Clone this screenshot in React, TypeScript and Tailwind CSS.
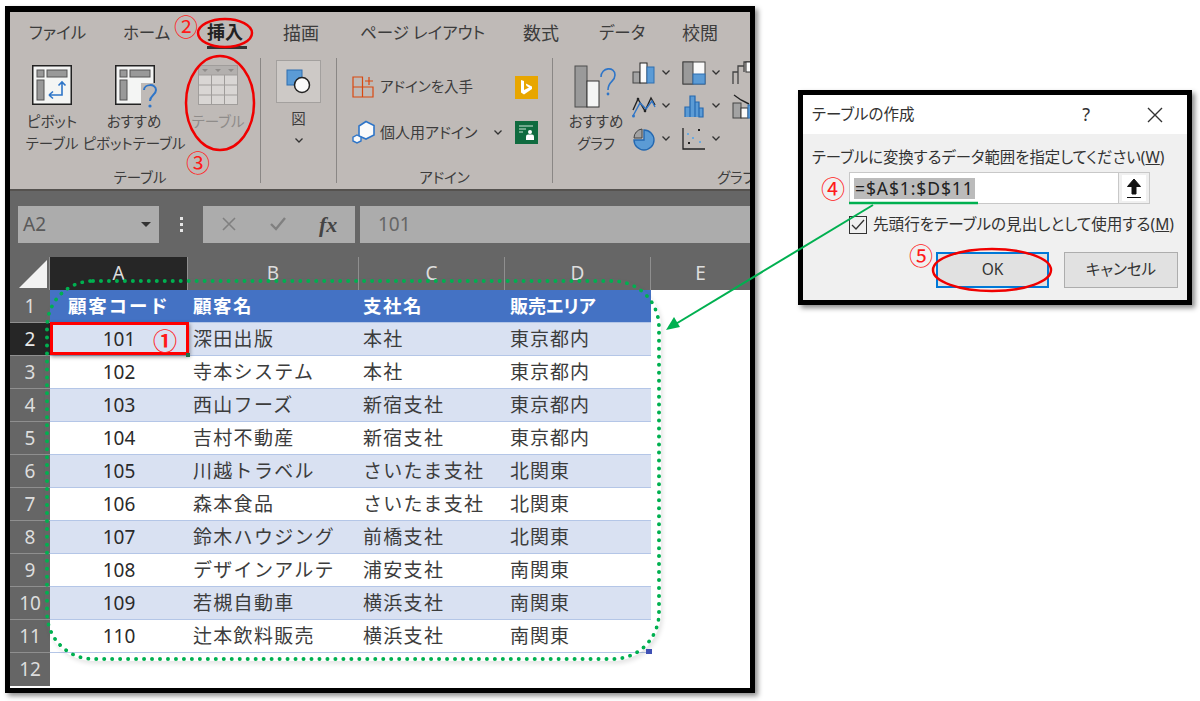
import React from 'react';

const tabs = [
  { label: 'ファイル', cls: 'w-[94px] text-[16.5px]' },
  { label: 'ホーム', cls: 'w-[84px] text-[16.5px]' },
  { label: '挿入', cls: 'w-[76px] text-[18px]' },
  { label: '描画', cls: 'w-[77px] text-[18px]' },
  { label: 'ページ レイアウト', cls: 'w-[163px] text-[16.5px]' },
  { label: '数式', cls: 'w-[76px] text-[18px]' },
  { label: 'データ', cls: 'w-[83px] text-[16.5px]' },
  { label: '校閲', cls: 'w-[60px] text-[18px]' },
];
const colWidths = ['w-[138px]', 'w-[171px]', 'w-[146px]', 'w-[146px]'];

const rows = [
  ['101', '深田出版', '本社', '東京都内'],
  ['102', '寺本システム', '本社', '東京都内'],
  ['103', '西山フーズ', '新宿支社', '東京都内'],
  ['104', '吉村不動産', '新宿支社', '東京都内'],
  ['105', '川越トラベル', 'さいたま支社', '北関東'],
  ['106', '森本食品', 'さいたま支社', '北関東'],
  ['107', '鈴木ハウジング', '前橋支社', '北関東'],
  ['108', 'デザインアルテ', '浦安支社', '南関東'],
  ['109', '若槻自動車', '横浜支社', '南関東'],
  ['110', '辻本飲料販売', '横浜支社', '南関東'],
];

function Chevron({ className }: { className?: string }) {
  return (
    <svg width="10" height="7" viewBox="0 0 10 7" className={className}>
      <path d="M1.5 1.5 L5 5 L8.5 1.5" fill="none" stroke="#333" strokeWidth="1.3" />
    </svg>
  );
}

function PivotIcon() {
  return (
    <svg width="40" height="40" viewBox="0 0 40 40">
      <rect x="0.75" y="0.75" width="38.5" height="38.5" fill="#f4f5f4" stroke="#222" strokeWidth="1.5" />
      <rect x="5" y="5" width="7" height="7" fill="#999" stroke="#555" />
      <rect x="15" y="5" width="20" height="7" fill="#999" stroke="#555" />
      <rect x="5" y="15" width="7" height="20" fill="#999" stroke="#555" />
      <path d="M30 17 V30 H18 M17 30 l4 -3.5 M17 30 l4 3.5 M26.5 20.5 L30 17 L33.5 20.5" fill="none" stroke="#2e75c8" strokeWidth="1.6" />
    </svg>
  );
}

function RecommendIcon() {
  return (
    <svg width="44" height="44" viewBox="0 0 44 44">
      <rect x="0.75" y="0.75" width="38.5" height="38.5" fill="#f4f5f4" stroke="#222" strokeWidth="1.5" />
      <rect x="5" y="5" width="7" height="7" fill="#999" stroke="#555" />
      <rect x="15" y="5" width="20" height="7" fill="#999" stroke="#555" />
      <rect x="5" y="15" width="7" height="20" fill="#999" stroke="#555" />
      <rect x="26" y="18" width="18" height="26" fill="#bfbab7" />
      <path d="M29 25 C29 19 41 18 41 25 C41 30 35 30 35 36" fill="none" stroke="#2e75c8" strokeWidth="2" />
      <circle cx="35" cy="41" r="1.6" fill="#2e75c8" />
    </svg>
  );
}

function TableIcon() {
  return (
    <svg width="40" height="40" viewBox="0 0 40 40">
      <rect x="0.5" y="0.5" width="39" height="39" fill="#d9d6d4" stroke="#a09d9b" />
      <rect x="1" y="1" width="38" height="9" fill="#b3b0ae" />
      <path d="M4 4 h6 l-3 3 z M17 4 h6 l-3 3 z M30 4 h6 l-3 3 z" fill="#8f8c8a" />
      <path d="M13.5 10 V40 M26.5 10 V40 M0 10 H40 M0 20 H40 M0 30 H40" stroke="#a09d9b" fill="none" />
    </svg>
  );
}

function ShapeIcon() {
  return (
    <svg width="26" height="26" viewBox="0 0 26 26">
      <rect x="1" y="1" width="15" height="15" fill="#5b9bd5" stroke="#2f6fb0" />
      <circle cx="16" cy="16" r="7.5" fill="#fafafa" stroke="#222" strokeWidth="1.5" />
    </svg>
  );
}

function StoreIcon() {
  return (
    <svg width="22" height="22" viewBox="0 0 22 22">
      <path d="M1 1 H10.5 V21 H1 Z M1 11 H21 V21 H10.5 M17 1 V9 M13 5 H21" fill="none" stroke="#d9480f" strokeWidth="1.2" />
    </svg>
  );
}

function AddinIcon() {
  return (
    <svg width="24" height="24" viewBox="0 0 24 24">
      <path d="M14 1.5 L22 5.5 V15 L14 19 L7 16 V6 Z" fill="#fafafa" stroke="#2e75c8" strokeWidth="1.6" />
      <path d="M5 15 L9 17.2 V21 L5 23 L1 21 V17.2 Z" fill="#fafafa" stroke="#2e75c8" strokeWidth="1.4" />
    </svg>
  );
}

function BingIcon() {
  return (
    <div className="w-[23px] h-[23px] bg-[#e8a600] flex items-center justify-center">
      <svg width="15" height="17" viewBox="0 0 15 17">
        <path d="M2 1 L5 2 V11 L10 8.5 L7.5 7 L6.8 4.6 L13 7.6 V10 L5 15.5 L2 13.5 Z" fill="#fff" />
      </svg>
    </div>
  );
}

function PeopleIcon() {
  return (
    <div className="w-[23px] h-[23px] bg-[#0f6b3f]">
      <svg width="23" height="23" viewBox="0 0 23 23">
        <path d="M4 5 H18 M4 8 H11 M4 11 H8" stroke="#cfe6da" strokeWidth="1.2" />
        <circle cx="15" cy="11" r="2" fill="#fff" />
        <path d="M11 19 V15.5 Q11 13.5 13 13.5 H17 Q19 13.5 19 15.5 V19 Z" fill="#fff" />
      </svg>
    </div>
  );
}

function RecommendChartIcon() {
  return (
    <svg width="44" height="44" viewBox="0 0 44 44">
      <rect x="1" y="1" width="12" height="41" fill="#9a9a9a" stroke="#4d4d4d" />
      <rect x="13" y="16" width="12" height="26" fill="#f4f5f4" stroke="#333" />
      <path d="M27 12 C27 2 41 1 41 10 C41 17 34 16 34 25" fill="none" stroke="#2e75c8" strokeWidth="1.6" />
      <circle cx="34" cy="29" r="1.4" fill="#2e75c8" />
    </svg>
  );
}

function ColumnChartIcon() {
  return (
    <svg width="24" height="24" viewBox="0 0 24 24">
      <rect x="1" y="11" width="7" height="11" fill="#a3a3a3" stroke="#444" />
      <rect x="8" y="2" width="7" height="20" fill="#fafafa" stroke="#222" />
      <rect x="15" y="6" width="7" height="16" fill="#5b9bd5" stroke="#2f6fb0" />
    </svg>
  );
}

function HierarchyIcon() {
  return (
    <svg width="24" height="24" viewBox="0 0 24 24">
      <rect x="1" y="1" width="22" height="22" fill="#fafafa" stroke="#444" />
      <rect x="1" y="1" width="10" height="22" fill="#9a9a9a" stroke="#444" />
      <rect x="11" y="13" width="12" height="10" fill="#5b9bd5" stroke="#2f6fb0" />
    </svg>
  );
}

function LineChartIcon() {
  return (
    <svg width="24" height="24" viewBox="0 0 24 24">
      <path d="M1 16 L6 5 L13 17 L19 4 L23 11" fill="none" stroke="#222" strokeWidth="1.4" />
      <path d="M1 22 L8 9 L14 15 L20 7 L23 13" fill="none" stroke="#2e75c8" strokeWidth="1.4" />
      <circle cx="1.5" cy="22" r="1.5" fill="#2e75c8" />
      <circle cx="6" cy="5" r="1.3" fill="#222" />
      <circle cx="13" cy="17" r="1.3" fill="#222" />
    </svg>
  );
}

function HistogramIcon() {
  return (
    <svg width="22" height="24" viewBox="0 0 22 24">
      <path d="M2 23 V13 H7 V23 M7 23 V2 H12 V23 M12 23 V8 H16 V23 M16 23 V14 H20 V23 Z" fill="#5b9bd5" stroke="#2468b0" strokeWidth="1.2" />
    </svg>
  );
}

function PieIcon() {
  return (
    <svg width="24" height="24" viewBox="0 0 24 24">
      <path d="M10 2 A9 9 0 0 0 2 11 H10 Z" fill="#a3a3a3" stroke="#444" />
      <path d="M12 3 A10 10 0 1 1 2 13 H12 Z" fill="#5b9bd5" stroke="#2468b0" strokeWidth="1.4" />
    </svg>
  );
}

function ScatterIcon() {
  return (
    <svg width="24" height="24" viewBox="0 0 24 24">
      <path d="M1 1 V22 H23" fill="none" stroke="#222" strokeWidth="1.3" />
      <rect x="16" y="2" width="2" height="2" fill="#222" />
      <rect x="6" y="15" width="2" height="2" fill="#222" />
      <rect x="5" y="6" width="2" height="2" fill="#6aa9de" />
      <rect x="10" y="10" width="2" height="2" fill="#6aa9de" />
      <rect x="17" y="14" width="2" height="2" fill="#6aa9de" />
    </svg>
  );
}

function WaterfallIcon() {
  return (
    <svg width="24" height="24" viewBox="0 0 24 24">
      <path d="M1 23 V11 H6 V5 H12 V1 H24 M6 11 V23 M12 5 V11" fill="none" stroke="#444" strokeWidth="1.3" />
      <rect x="14" y="1" width="6" height="10" fill="#fafafa" stroke="#333" />
    </svg>
  );
}

function ComboIcon() {
  return (
    <svg width="24" height="26" viewBox="0 0 24 26">
      <path d="M2 2 L9 7 L17 11" fill="none" stroke="#222" strokeWidth="1.4" />
      <rect x="1" y="10" width="8" height="15" fill="#a3a3a3" stroke="#444" />
      <rect x="9" y="15" width="7" height="10" fill="#fafafa" stroke="#333" />
      <rect x="16" y="12" width="8" height="13" fill="#5b9bd5" stroke="#2f6fb0" />
    </svg>
  );
}

function RibbonButton({ icon, lines, className, dim }: { icon: React.ReactNode; lines: string[]; className: string; dim?: boolean }) {
  return (
    <div className={`flex flex-col items-center pt-[15px] shrink-0 ${className}`}>
      <div className="h-[45px]">{icon}</div>
      {lines.map((l) => (
        <div key={l} className={`h-[22px] leading-[22px] text-[14.5px] whitespace-nowrap [font-feature-settings:'palt'] ${dim ? 'text-[#8f8c8a]' : 'text-[#3c3c3c]'}`}>
          {l}
        </div>
      ))}
    </div>
  );
}

function GroupLabel({ children, className }: { children: React.ReactNode; className?: string }) {
  return <div className={`h-[30px] shrink-0 leading-[30px] text-[14.5px] text-[#3c3c3c] whitespace-nowrap [font-feature-settings:'palt'] ${className ?? ''}`}>{children}</div>;
}

function Ribbon() {
  return (
    <div className="h-[179px] bg-[#bfbab7] border-b-[2px] border-[#55524f] shrink-0 flex flex-col overflow-hidden">
      <div className="h-[38px] pl-[19px] pt-[8px] flex leading-[26px] text-[#3c3c3c] [font-feature-settings:'palt'] whitespace-nowrap shrink-0">
        {tabs.map((t) => (
          <div key={t.label} className={`shrink-0 ${t.cls}`}>
            {t.label === '挿入' ? <div className="font-bold w-[40px] h-[30px] border-b-[3px] border-[#333] text-[#222] -mt-[1px]">{t.label}</div> : t.label}
          </div>
        ))}
      </div>
      <div className="flex h-[139px]">
        {/* テーブル */}
        <div className="w-[251px] flex flex-col shrink-0 border-r border-[#8a8785] my-[8px] h-[125px]">
          <div className="flex pl-[12px] h-[112px] shrink-0 -mt-[8px]">
            <RibbonButton className="w-[60px]" icon={<PivotIcon />} lines={['ピボット', 'テーブル']} />
            <RibbonButton className="w-[104px]" icon={<div className="pl-[6px]"><RecommendIcon /></div>} lines={['おすすめ', 'ピボットテーブル']} />
            <RibbonButton className="w-[64px]" dim icon={<TableIcon />} lines={['テーブル']} />
          </div>
          <GroupLabel className="text-center pl-[10px]">テーブル</GroupLabel>
        </div>
        {/* 図 */}
        <div className="w-[76px] flex flex-col items-center shrink-0 border-r border-[#8a8785] my-[8px] h-[125px]">
          <div className="w-[45px] h-[43px] mt-[2px] bg-[#cdc9c6] border border-[#a3a09e] flex items-center justify-center">
            <ShapeIcon />
          </div>
          <div className="text-[14.5px] leading-[22px] text-[#3c3c3c] mt-[4px]">図</div>
          <Chevron className="mt-[8px]" />
        </div>
        {/* アドイン */}
        <div className="w-[216px] flex flex-col shrink-0 border-r border-[#8a8785] my-[8px] h-[125px]">
          <div className="h-[104px] shrink-0 pl-[15px] flex flex-col gap-[21px] pt-[17px]">
            <div className="flex items-center h-[24px]">
              <div className="w-[28px]"><StoreIcon /></div>
              <div className="w-[135px] text-[14.5px] text-[#3c3c3c] [font-feature-settings:'palt']">アドインを入手</div>
              <BingIcon />
            </div>
            <div className="flex items-center h-[24px]">
              <div className="w-[28px]"><AddinIcon /></div>
              <div className="w-[113px] text-[15px] text-[#3c3c3c] [font-feature-settings:'palt'] whitespace-nowrap">個人用アドイン</div>
              <div className="w-[22px]"><Chevron /></div>
              <PeopleIcon />
            </div>
          </div>
          <GroupLabel className="text-center">アドイン</GroupLabel>
        </div>
        {/* グラフ */}
        <div className="flex-1 flex flex-col min-w-0">
          <div className="flex h-[112px] shrink-0">
            <RibbonButton className="w-[70px] ml-[8px]" icon={<RecommendChartIcon />} lines={['おすすめ', 'グラフ']} />
            <div className="grid grid-cols-[50px_50px_40px] grid-rows-[33px_33px_33px] pt-[4px] ml-[1px] mt-[2px]">
              {[<ColumnChartIcon />, <HierarchyIcon />, <WaterfallIcon />, <LineChartIcon />, <HistogramIcon />, <ComboIcon />, <PieIcon />, <ScatterIcon />].map((icon, i) => (
                <div key={i} className="flex items-center gap-[5px]">
                  <div className="w-[24px] flex justify-center">{icon}</div>
                  {i % 3 !== 2 && <Chevron />}
                </div>
              ))}
            </div>
          </div>
          <GroupLabel className="pl-[164px]">グラフ</GroupLabel>
        </div>
      </div>
    </div>
  );
}

function FormulaBar() {
  return (
    <div className="h-[66px] shrink-0 bg-[#666666] flex items-center pl-[8px]">
      <div className="w-[141px] h-[37px] bg-[#acacac] flex items-center justify-between pl-[5px] pr-[8px] text-[#5a5a5a] text-[19px]">
        A2
        <div className="w-0 h-0 border-x-[5px] border-x-transparent border-t-[5px] border-t-[#333]" />
      </div>
      <div className="w-[44px] flex flex-col items-center gap-[3px]">
        <div className="w-[3px] h-[3px] bg-[#e6e6e6]" />
        <div className="w-[3px] h-[3px] bg-[#e6e6e6]" />
        <div className="w-[3px] h-[3px] bg-[#e6e6e6]" />
      </div>
      <div className="w-[152px] h-[37px] bg-[#acacac] flex items-center text-[#808080] pl-[18px] gap-[32px] shrink-0">
        <svg width="16" height="16" viewBox="0 0 16 16"><path d="M2 2 L14 14 M14 2 L2 14" stroke="#808080" strokeWidth="1.6" /></svg>
        <svg width="18" height="16" viewBox="0 0 18 16"><path d="M2 8 L7 13 L16 2" fill="none" stroke="#808080" strokeWidth="2.4" /></svg>
        <span className="font-['Liberation_Serif',serif] italic font-bold text-[22px] text-[#444]">fx</span>
      </div>
      <div className="ml-[5px] flex-1 h-[37px] bg-[#acacac] pl-[18px] flex items-center text-[19px] text-[#666]">101</div>
    </div>
  );
}

function Sheet() {
  const headCell = 'h-full flex items-center justify-center border-r border-[#8f8f8f] text-[#dddddd] text-[19px]';
  return (
    <div className="flex-1 min-h-0 bg-white flex flex-col">
      <div className="h-[33px] flex bg-[#666666] shrink-0">
        <div className="w-[40px] h-full relative border-r border-[#8f8f8f]">
          <div className="ml-[9px] mt-[3px] w-0 h-0 border-l-[28px] border-l-transparent border-b-[28px] border-b-[#f2f2f2]" />
        </div>
        {['A', 'B', 'C', 'D'].map((c, i) => (
          <div key={c} className={`${headCell} ${colWidths[i]} ${i === 0 ? 'bg-[#262626]' : ''}`}>{c}</div>
        ))}
        <div className="flex-1 h-full flex items-center justify-center text-[#dddddd] text-[19px]">E</div>
      </div>
      <div className="flex h-[33px] shrink-0">
        <div className="w-[40px] bg-[#666666] text-[#dddddd] text-[19px] flex items-center justify-center border-b border-[#8f8f8f]">1</div>
        <div className="w-[601px] bg-[#4472c4] text-white font-bold text-[18.5px] flex items-center border-b border-[#b4c6e7]">
          <div className={`${colWidths[0]} pl-[18px] whitespace-nowrap tracking-[1.8px]`}>顧客コード</div>
          <div className={`${colWidths[1]} pl-[5px] tracking-[1.5px]`}>顧客名</div>
          <div className={`${colWidths[2]} pl-[4px] tracking-[1.5px]`}>支社名</div>
          <div className={`${colWidths[3]} pl-[5px] text-[18px] [font-feature-settings:'palt']`}>販売エリア</div>
        </div>
      </div>
      {rows.map((r, i) => (
        <div key={r[0]} className="flex h-[33px] shrink-0">
          <div className={`w-[40px] text-[19px] flex items-center justify-center border-b border-[#8f8f8f] ${i === 0 ? 'bg-[#262626] text-[#e8e8e8]' : 'bg-[#666666] text-[#dddddd]'}`}>{i + 2}</div>
          <div className={`w-[601px] flex items-center border-b border-[#b4c6e7] text-[19px] text-[#3c3c3c] ${i % 2 === 0 ? 'bg-[#d9e1f2]' : 'bg-white'}`}>
            <div className={`${colWidths[0]} text-center text-[#2a2a2a]`}>{r[0]}</div>
            <div className={`${colWidths[1]} pl-[5px] tracking-[1.3px] whitespace-nowrap`}>{r[1]}</div>
            <div className={`${colWidths[2]} pl-[4px] tracking-[1.3px] whitespace-nowrap`}>{r[2]}</div>
            <div className={`${colWidths[3]} pl-[5px] tracking-[1px] whitespace-nowrap`}>{r[3]}</div>
          </div>
        </div>
      ))}
      <div className="flex h-[33px] shrink-0">
        <div className="w-[40px] bg-[#666666] text-[#dddddd] text-[19px] flex items-center justify-center">12</div>
      </div>
    </div>
  );
}

function Dialog() {
  return (
    <div className="ml-[43px] mt-[84px] w-[394px] h-[215px] border-[5px] border-black bg-[#f0f0f0] shadow-[3px_3px_5px_rgba(0,0,0,0.45)] shrink-0 flex flex-col text-[#333]">
      <div className="h-[39px] bg-white flex items-center pl-[9px] text-[15.5px] [font-feature-settings:'palt'] shrink-0">
        <span className="flex-1">テーブルの作成</span>
        <span className="text-[18px] mr-[57px]">?</span>
        <svg width="16" height="16" viewBox="0 0 16 16" className="mr-[24px]"><path d="M1 1 L15 15 M15 1 L1 15" stroke="#333" strokeWidth="1.4" /></svg>
      </div>
      <div className="pl-[9px] pt-[13px] text-[15.4px] leading-[22px] whitespace-nowrap [font-feature-settings:'palt']">
        テーブルに変換するデータ範囲を指定してください(<span className="underline">W</span>)
      </div>
      <div className="ml-[46px] mt-[3px] w-[301px] h-[32px] bg-white border border-[#c8c8c8] flex items-center pl-[4px] justify-between">
        <span className="bg-[#bbbbbb] text-[17.5px] leading-[21px] px-[1px] tracking-[0.9px] text-[#222]">=$A$1:$D$11</span>
        <div className="w-[31px] h-full bg-[#f0f0f0] border-l border-[#c8c8c8] flex items-center justify-center">
          <div className="w-[24px] h-[26px] bg-white flex items-center justify-center">
            <svg width="16" height="22" viewBox="0 0 16 22"><path d="M8 2 L14.5 9.5 H10 V17 H6 V9.5 H1.5 Z M1 20.5 H15" fill="#111" stroke="#111" strokeWidth="1" /></svg>
          </div>
        </div>
      </div>
      <div className="ml-[46px] mt-[12px] flex items-center gap-[6px] h-[18px] text-[15.6px] whitespace-nowrap [font-feature-settings:'palt']">
        <div className="w-[18px] h-[18px] border border-[#333] bg-[#f0f0f0] flex items-center justify-center">
          <svg width="14" height="12" viewBox="0 0 14 12"><path d="M1 6 L5 10 L13 1" fill="none" stroke="#333" strokeWidth="1.3" /></svg>
        </div>
        <span>先頭行をテーブルの見出しとして使用する(<span className="underline">M</span>)</span>
      </div>
      <div className="ml-[133px] mt-[18px] flex gap-[15px] text-[15.5px]">
        <div className="w-[113px] h-[36px] bg-[#e1e1e1] border-2 border-[#0078d7] flex items-center justify-center">OK</div>
        <div className="w-[114px] h-[36px] bg-[#e1e1e1] border border-[#adadad] flex items-center justify-center [font-feature-settings:'palt']">キャンセル</div>
      </div>
    </div>
  );
}

export default function App() {
  const circled = 'absolute text-[#ff1a1a] text-[24px] leading-none';
  return (
    <div className="relative w-[1200px] h-[701px] bg-white overflow-hidden flex items-start pl-[5px] pt-[6px] font-['Noto_Sans','Noto_Sans_CJK_JP',sans-serif]">
      <div className="w-[750px] h-[687px] border-[5px] border-t-[6px] border-black flex flex-col overflow-hidden shrink-0 shadow-[3px_3px_5px_rgba(0,0,0,0.45)]">
        <Ribbon />
        <FormulaBar />
        <Sheet />
      </div>
      <Dialog />

      {/* annotations */}
      <div className="absolute left-[50px] top-[322px] w-[139px] h-[33px] border-[3px] border-[#ff0000] shadow-[1px_2px_4px_rgba(0,0,0,0.4)]" />
      <div className="absolute left-[186px] top-[353px] w-[4px] h-[4px] bg-[#1e7145]" />
      <div className="absolute left-[45px] top-[279px] w-[616px] h-[382px] border-[4px] border-dotted border-[#00b050] rounded-[48px] shadow-[2px_3px_4px_rgba(0,0,0,0.1)]" />
      <div className="absolute left-[646px] top-[649px] w-[6px] h-[5px] bg-[#3f51b5]" />
      <svg className="absolute left-0 top-0 pointer-events-none" width="1200" height="701" viewBox="0 0 1200 701">
        <ellipse cx="225" cy="33" rx="27" ry="14" fill="none" stroke="#f00000" strokeWidth="2.5" />
        <ellipse cx="220" cy="103" rx="34" ry="47" fill="none" stroke="#f00000" strokeWidth="2.5" />
        <ellipse cx="992" cy="270" rx="59" ry="21" fill="none" stroke="#f00000" strokeWidth="2.5" />
        <path d="M849 203 H978" stroke="#00b050" strokeWidth="2.5" />
        <path d="M873 205 L674 325" stroke="#00b050" strokeWidth="2" />
        <path d="M666 330 L680 327 L674 317 Z" fill="#00b050" />
      </svg>
      <span className={`${circled} left-[174px] top-[15px]`}>②</span>
      <span className={`${circled} left-[186px] top-[151px]`}>③</span>
      <span className={`${circled} left-[153px] top-[329px] font-bold`}>①</span>
      <span className={`${circled} left-[821px] top-[177px]`}>④</span>
      <span className={`${circled} left-[909px] top-[244px]`}>⑤</span>
    </div>
  );
}
